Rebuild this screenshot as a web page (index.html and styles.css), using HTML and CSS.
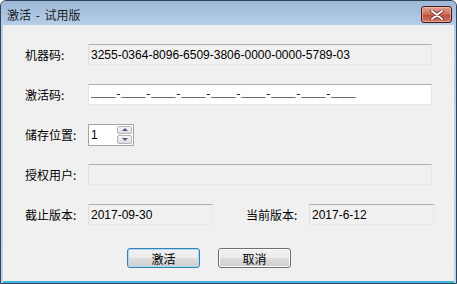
FILE: index.html
```html
<!DOCTYPE html>
<html lang="zh-CN">
<head>
  <meta charset="UTF-8">
  <title>激活 - 试用版</title>
  <link rel="stylesheet" href="styles.css">
</head>
<body>
  <div class="window">
    <div class="titlebar">
      <span class="title">激活 - 试用版</span>
      <button class="close" title="关闭">
        <svg width="14" height="10" viewBox="0 0 14 10">
          <path d="M2 1 L12 9 M12 1 L2 9" stroke="#5a2020" stroke-width="3.4" stroke-linecap="round"/>
          <path d="M2 1 L12 9 M12 1 L2 9" stroke="#fff" stroke-width="2" stroke-linecap="round"/>
        </svg>
      </button>
    </div>

    <div class="client">
      <div class="form">
        <div class="row">
          <label class="label">机器码:</label>
          <div class="field readonly wide num">3255-0364-8096-6509-3806-0000-0000-5789-03</div>
        </div>

        <div class="row">
          <label class="label">激活码:</label>
          <div class="field wide mono mask">____-____-____-____-____-____-____-____-____</div>
        </div>

        <div class="row">
          <label class="label">储存位置:</label>
          <div class="spinner">
            <span class="num">1</span>
            <div class="spin-buttons">
              <span class="spin up"><i></i></span>
              <span class="spin down"><i></i></span>
            </div>
          </div>
        </div>

        <div class="row">
          <label class="label">授权用户:</label>
          <div class="field readonly wide"></div>
        </div>

        <div class="row">
          <label class="label">截止版本:</label>
          <div class="field readonly short num">2017-09-30</div>
          <label class="label second">当前版本:</label>
          <div class="field readonly short num">2017-6-12</div>
        </div>
      </div>

      <div class="actions">
        <button class="btn default">激活</button>
        <button class="btn">取消</button>
      </div>
    </div>
  </div>
</body>
</html>
```

FILE: styles.css
```css
* {
  box-sizing: border-box;
}

body {
  margin: 0;
  padding: 0;
  background: #fff;
  font-family: "Noto Sans CJK SC", "Liberation Sans", sans-serif;
  font-size: 12px;
  color: #000;
}

.window {
  width: 457px;
  height: 284px;
  border: 1px solid #31435a;
  border-radius: 6px 6px 0 0;
  background: linear-gradient(#a0bad8, #b8cfe8 30px, #bcd5ee);
  display: flex;
  flex-direction: column;
  overflow: hidden;
}

.titlebar {
  height: 24px;
  display: flex;
  align-items: center;
  justify-content: space-between;
  padding: 0 4px 0 6px;
  background: linear-gradient(#9db8d6, #b6cee8);
}

.title {
  font-size: 12px;
  word-spacing: 2px;
  color: #1b1b1b;
  padding-top: 2px;
}

.close {
  width: 31px;
  height: 17px;
  margin-top: 3px;
  padding: 0;
  border: 1px solid #4a1616;
  border-radius: 3px;
  background: linear-gradient(#e0a193, #cf7462 45%, #c0503c 55%, #cf7866);
  box-shadow: inset 0 0 0 1px rgba(255, 220, 210, 0.45);
  display: flex;
  align-items: center;
  justify-content: center;
}

.client {
  flex: 1;
  margin: 0 2px;
  background: #f0f0f0;
  border-bottom: 2px solid #3fb6df;
  display: flex;
  flex-direction: column;
}

.form {
  padding: 19px 0 0 22px;
  display: flex;
  flex-direction: column;
  gap: 19px;
}

.row {
  display: flex;
  align-items: center;
  height: 21px;
}

.label {
  width: 63px;
  flex-shrink: 0;
  white-space: nowrap;
}

.label.second {
  margin-left: 33px;
}

.field {
  height: 21px;
  padding: 0 2px;
  display: flex;
  align-items: center;
  background: #fff;
  border: 1px solid #e3e9ef;
  border-top-color: #abadb3;
  border-left-color: #e2e3ea;
  white-space: nowrap;
  overflow: hidden;
}

.field.readonly {
  background: #f0f0f0;
  border-color: #abadb3 #e3e9ef #e3e9ef #dcdde2;
}

.wide {
  width: 344px;
}

.short {
  width: 125px;
}

.num {
  font-family: "Liberation Sans", Arial, sans-serif;
  font-size: 12px;
}

.mono {
  font-family: "Liberation Mono", "DejaVu Sans Mono", monospace;
  font-size: 11px;
  letter-spacing: -0.6px;
}

.mask {
  padding-bottom: 2px;
}

.spinner {
  width: 46px;
  height: 22px;
  border: 1px solid #a4a4a4;
  background: #fff;
  display: flex;
  align-items: center;
  justify-content: space-between;
  padding: 1px 1px 1px 2px;
}

.spin-buttons {
  width: 15px;
  height: 18px;
  display: flex;
  flex-direction: column;
  gap: 1px;
}

.spin {
  flex: 1;
  border: 1px solid #b5b5b5;
  border-radius: 2px;
  background: linear-gradient(#f6f6f6, #dedede);
  display: flex;
  align-items: center;
  justify-content: center;
}

.spin i {
  width: 0;
  height: 0;
  border-left: 3px solid transparent;
  border-right: 3px solid transparent;
}

.spin.up i {
  border-bottom: 3px solid #4d6185;
}

.spin.down i {
  border-top: 3px solid #4d6185;
}

.actions {
  display: flex;
  gap: 18px;
  padding: 23px 0 0 124px;
}

.btn {
  width: 73px;
  height: 20px;
  padding: 0;
  font-family: "Noto Sans CJK SC", sans-serif;
  font-size: 12px;
  color: #000;
  border: 1px solid #707070;
  border-radius: 3px;
  background: linear-gradient(#f2f2f2, #ebebeb 50%, #dddddd 50%, #cfcfcf);
  box-shadow: inset 0 0 0 1px #fbfbfb;
}

.btn.default {
  border-color: #3c7fb1;
  box-shadow: inset 0 0 0 1px #9fdcf6;
}
```
